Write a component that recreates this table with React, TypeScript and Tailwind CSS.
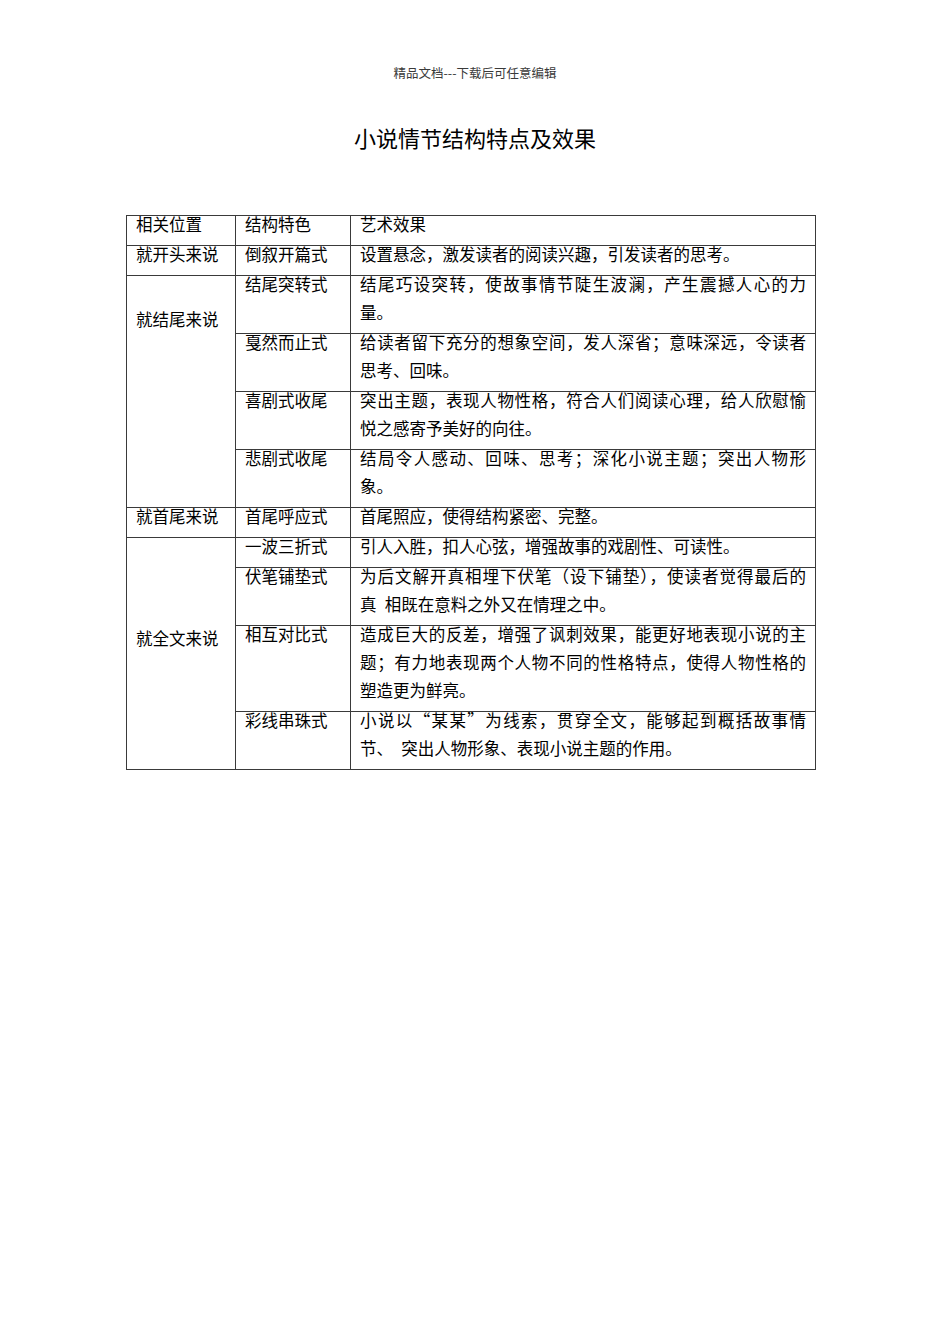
import React from "react";

const L = ({ children, j }: { children: React.ReactNode; j?: boolean }) => (
  <div
    className={
      j
        ? "h-[28px] leading-[17px] text-justify [text-align-last:justify]"
        : "h-[28px] leading-[17px]"
    }
  >
    {children}
  </div>
);

const td = "border border-[#3a3a3a] align-top pl-[9px] pr-[9px] pt-0 pb-[1px] font-normal";

export default function App() {
  return (
    <div
      lang="zh-CN"
      className="w-[950px] min-h-[1344px] bg-white text-black font-['Noto_Sans_CJK_SC','Liberation_Sans',sans-serif]"
    >
      <div className="pt-[63px] text-center text-[12.5px] leading-[19px] text-[#3a3a3a]">
        精品文档---下载后可任意编辑
      </div>
      <h1 className="mt-[40px] text-center text-[22px] leading-[30px] font-normal">
        小说情节结构特点及效果
      </h1>
      <table className="mt-[63px] ml-[126px] w-[689px] table-fixed border-collapse text-[16.5px] text-left">
        <colgroup>
          <col className="w-[109px]" />
          <col className="w-[115px]" />
          <col className="w-[465px]" />
        </colgroup>
        <tbody>
          <tr>
            <td className={td}><L>相关位置</L></td>
            <td className={td}><L>结构特色</L></td>
            <td className={td}><L>艺术效果</L></td>
          </tr>
          <tr>
            <td className={td}><L>就开头来说</L></td>
            <td className={td}><L>倒叙开篇式</L></td>
            <td className={td}><L>设置悬念，激发读者的阅读兴趣，引发读者的思考。</L></td>
          </tr>
          <tr>
            <td rowSpan={4} className={td}>
              <div className="pt-[35px]"><L>就结尾来说</L></div>
            </td>
            <td className={td}><L>结尾突转式</L></td>
            <td className={td}>
              <L j>结尾巧设突转，使故事情节陡生波澜，产生震撼人心的力</L>
              <L>量。</L>
            </td>
          </tr>
          <tr>
            <td className={td}><L>戛然而止式</L></td>
            <td className={td}>
              <L j>给读者留下充分的想象空间，发人深省；意味深远，令读者</L>
              <L>思考、回味。</L>
            </td>
          </tr>
          <tr>
            <td className={td}><L>喜剧式收尾</L></td>
            <td className={td}>
              <L j>突出主题，表现人物性格，符合人们阅读心理，给人欣慰愉</L>
              <L>悦之感寄予美好的向往。</L>
            </td>
          </tr>
          <tr>
            <td className={td}><L>悲剧式收尾</L></td>
            <td className={td}>
              <L j>结局令人感动、回味、思考；深化小说主题；突出人物形</L>
              <L>象。</L>
            </td>
          </tr>
          <tr>
            <td className={td}><L>就首尾来说</L></td>
            <td className={td}><L>首尾呼应式</L></td>
            <td className={td}><L>首尾照应，使得结构紧密、完整。</L></td>
          </tr>
          <tr>
            <td rowSpan={4} className={td}>
              <div className="pt-[92px]"><L>就全文来说</L></div>
            </td>
            <td className={td}><L>一波三折式</L></td>
            <td className={td}><L>引人入胜，扣人心弦，增强故事的戏剧性、可读性。</L></td>
          </tr>
          <tr>
            <td className={td}><L>伏笔铺垫式</L></td>
            <td className={td}>
              <L j>为后文解开真相埋下伏笔（设下铺垫），使读者觉得最后的</L>
              <L>真{"\u2002"}相既在意料之外又在情理之中。</L>
            </td>
          </tr>
          <tr>
            <td className={td}><L>相互对比式</L></td>
            <td className={td}>
              <L j>造成巨大的反差，增强了讽刺效果，能更好地表现小说的主</L>
              <L j>题；有力地表现两个人物不同的性格特点，使得人物性格的</L>
              <L>塑造更为鲜亮。</L>
            </td>
          </tr>
          <tr>
            <td className={td}><L>彩线串珠式</L></td>
            <td className={td}>
              <L j>小说以“某某”为线索，贯穿全文，能够起到概括故事情</L>
              <L>节、{"\u3000"}突出人物形象、表现小说主题的作用。</L>
            </td>
          </tr>
        </tbody>
      </table>
    </div>
  );
}
